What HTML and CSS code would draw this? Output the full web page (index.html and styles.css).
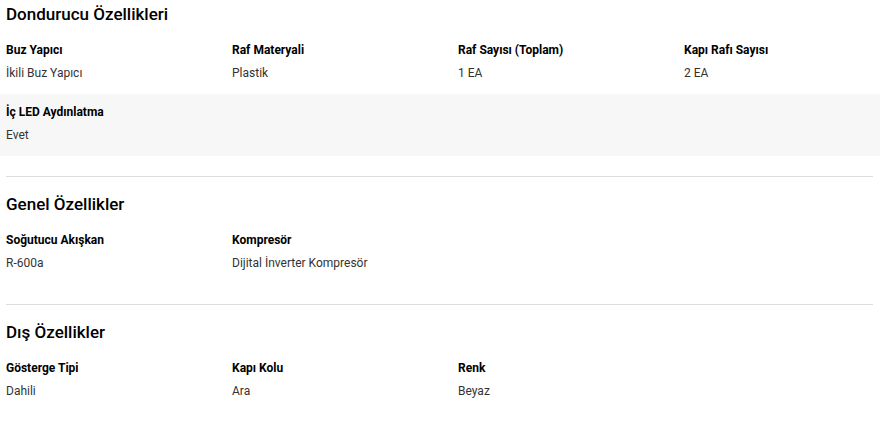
FILE: index.html
```html
<!DOCTYPE html>
<html>
<head>
<meta charset="utf-8" />
<title>Özellikler</title>
<link rel="stylesheet" href="styles.css">
</head>
<body>
	<div class="specs">
		<div class="spec-group first">
			<h3 class="spec-title">Dondurucu Özellikleri</h3>
			<div class="spec-row">
				<div class="spec-item"><span class="spec-name">Buz Yapıcı</span><span class="spec-value">İkili Buz Yapıcı</span></div>
				<div class="spec-item"><span class="spec-name">Raf Materyali</span><span class="spec-value">Plastik</span></div>
				<div class="spec-item"><span class="spec-name">Raf Sayısı (Toplam)</span><span class="spec-value">1 EA</span></div>
				<div class="spec-item"><span class="spec-name">Kapı Rafı Sayısı</span><span class="spec-value">2 EA</span></div>
			</div>
			<div class="spec-row odd">
				<div class="spec-item"><span class="spec-name">İç LED Aydınlatma</span><span class="spec-value">Evet</span></div>
			</div>
		</div>
		<div class="spec-group">
			<h3 class="spec-title">Genel Özellikler</h3>
			<div class="spec-row">
				<div class="spec-item"><span class="spec-name">Soğutucu Akışkan</span><span class="spec-value">R-600a</span></div>
				<div class="spec-item"><span class="spec-name">Kompresör</span><span class="spec-value">Dijital İnverter Kompresör</span></div>
			</div>
		</div>
		<div class="spec-group last">
			<h3 class="spec-title">Dış Özellikler</h3>
			<div class="spec-row">
				<div class="spec-item"><span class="spec-name">Gösterge Tipi</span><span class="spec-value">Dahili</span></div>
				<div class="spec-item"><span class="spec-name">Kapı Kolu</span><span class="spec-value">Ara</span></div>
				<div class="spec-item"><span class="spec-name">Renk</span><span class="spec-value">Beyaz</span></div>
			</div>
		</div>
	</div>
</body>
</html>
```

FILE: styles.css
```css
html, body{
	margin:0;
	background:#fff;
	font:12px/16px Roboto, Arial, sans-serif;
	color:#000;
}
.specs{padding:0 7px 0 6px; overflow:hidden;}
.spec-group{padding:15px 0 20px; border-bottom:1px solid #ddd;}
.spec-group.first{padding-top:2px;}
.spec-group.last{border-bottom:0;}
.spec-title{
	margin:0 0 6px;
	font-size:17px;
	line-height:24px;
	font-weight:500;
	color:#000;
}
.spec-row{
	display:grid;
	grid-template-columns:repeat(4, 226px);
	padding:10px 0 13px;
}
.spec-row.odd{margin:0 -7px 0 -6px; padding-left:6px; padding-right:7px; background:#f7f7f7;}
.spec-item{display:flex; flex-direction:column; gap:7px;}
.spec-name{font-weight:700; color:#000;}
.spec-value{color:#333;}
```
